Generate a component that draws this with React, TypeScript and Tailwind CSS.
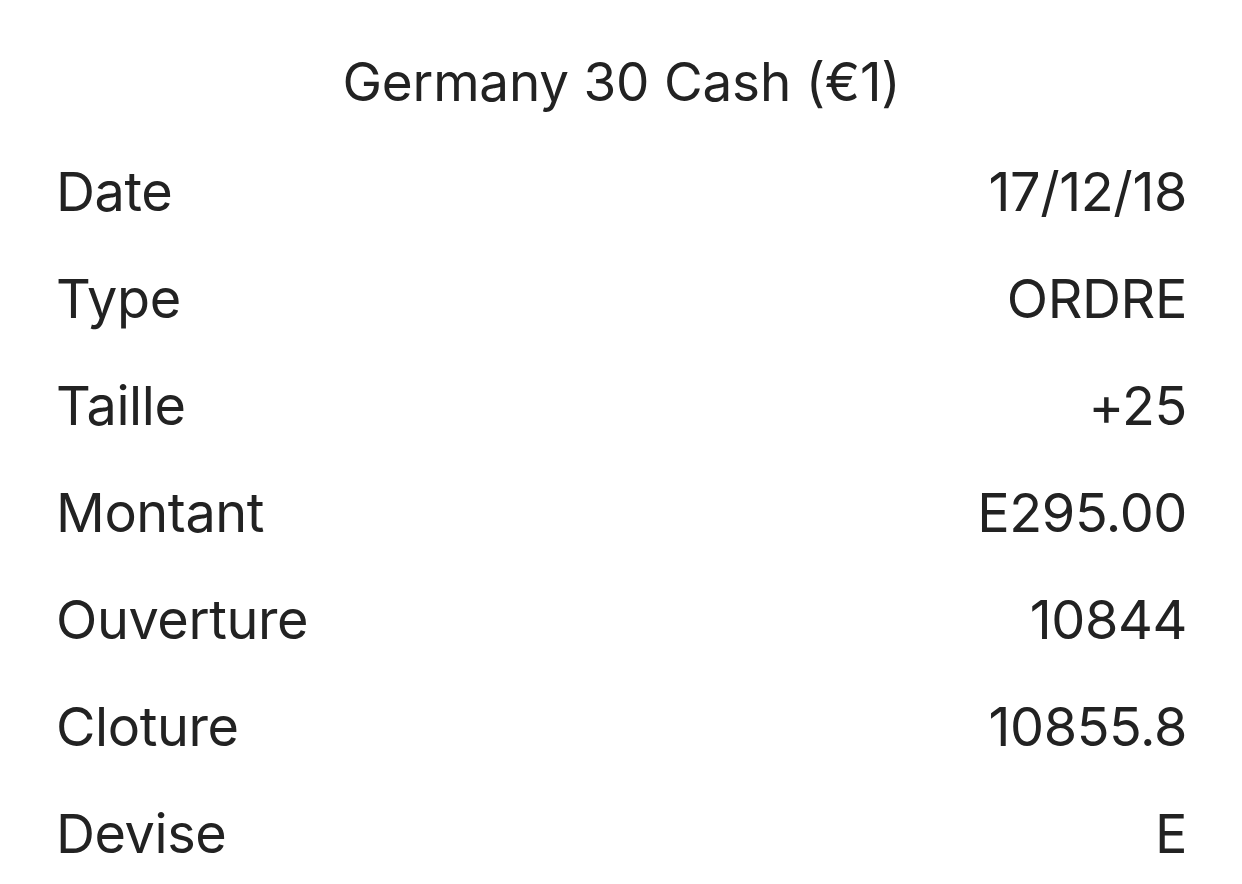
const rows: [string, string][] = [
  ["Date", "17/12/18"],
  ["Type", "ORDRE"],
  ["Taille", "+25"],
  ["Montant", "E295.00"],
  ["Ouverture", "10844"],
  ["Cloture", "10855.8"],
  ["Devise", "E"],
];

export default function App() {
  return (
    <div className="min-h-[884px] w-[1242px] bg-white pl-[56px] pr-[55px] pt-[42px] text-[#222222] font-['Inter','Liberation_Sans',sans-serif]">
      <h1 className="text-center text-[53px] leading-[80px] font-normal tracking-[-0.2px] mb-[16px]">
        Germany 30 Cash (€1)
      </h1>
      <div className="flex flex-col">
        {rows.map(([label, value]) => (
          <div
            key={label}
            className="flex items-center justify-between text-[54px] leading-[107px] tracking-[-0.4px]"
          >
            <span>{label}</span>
            <span>{value}</span>
          </div>
        ))}
      </div>
    </div>
  );
}
